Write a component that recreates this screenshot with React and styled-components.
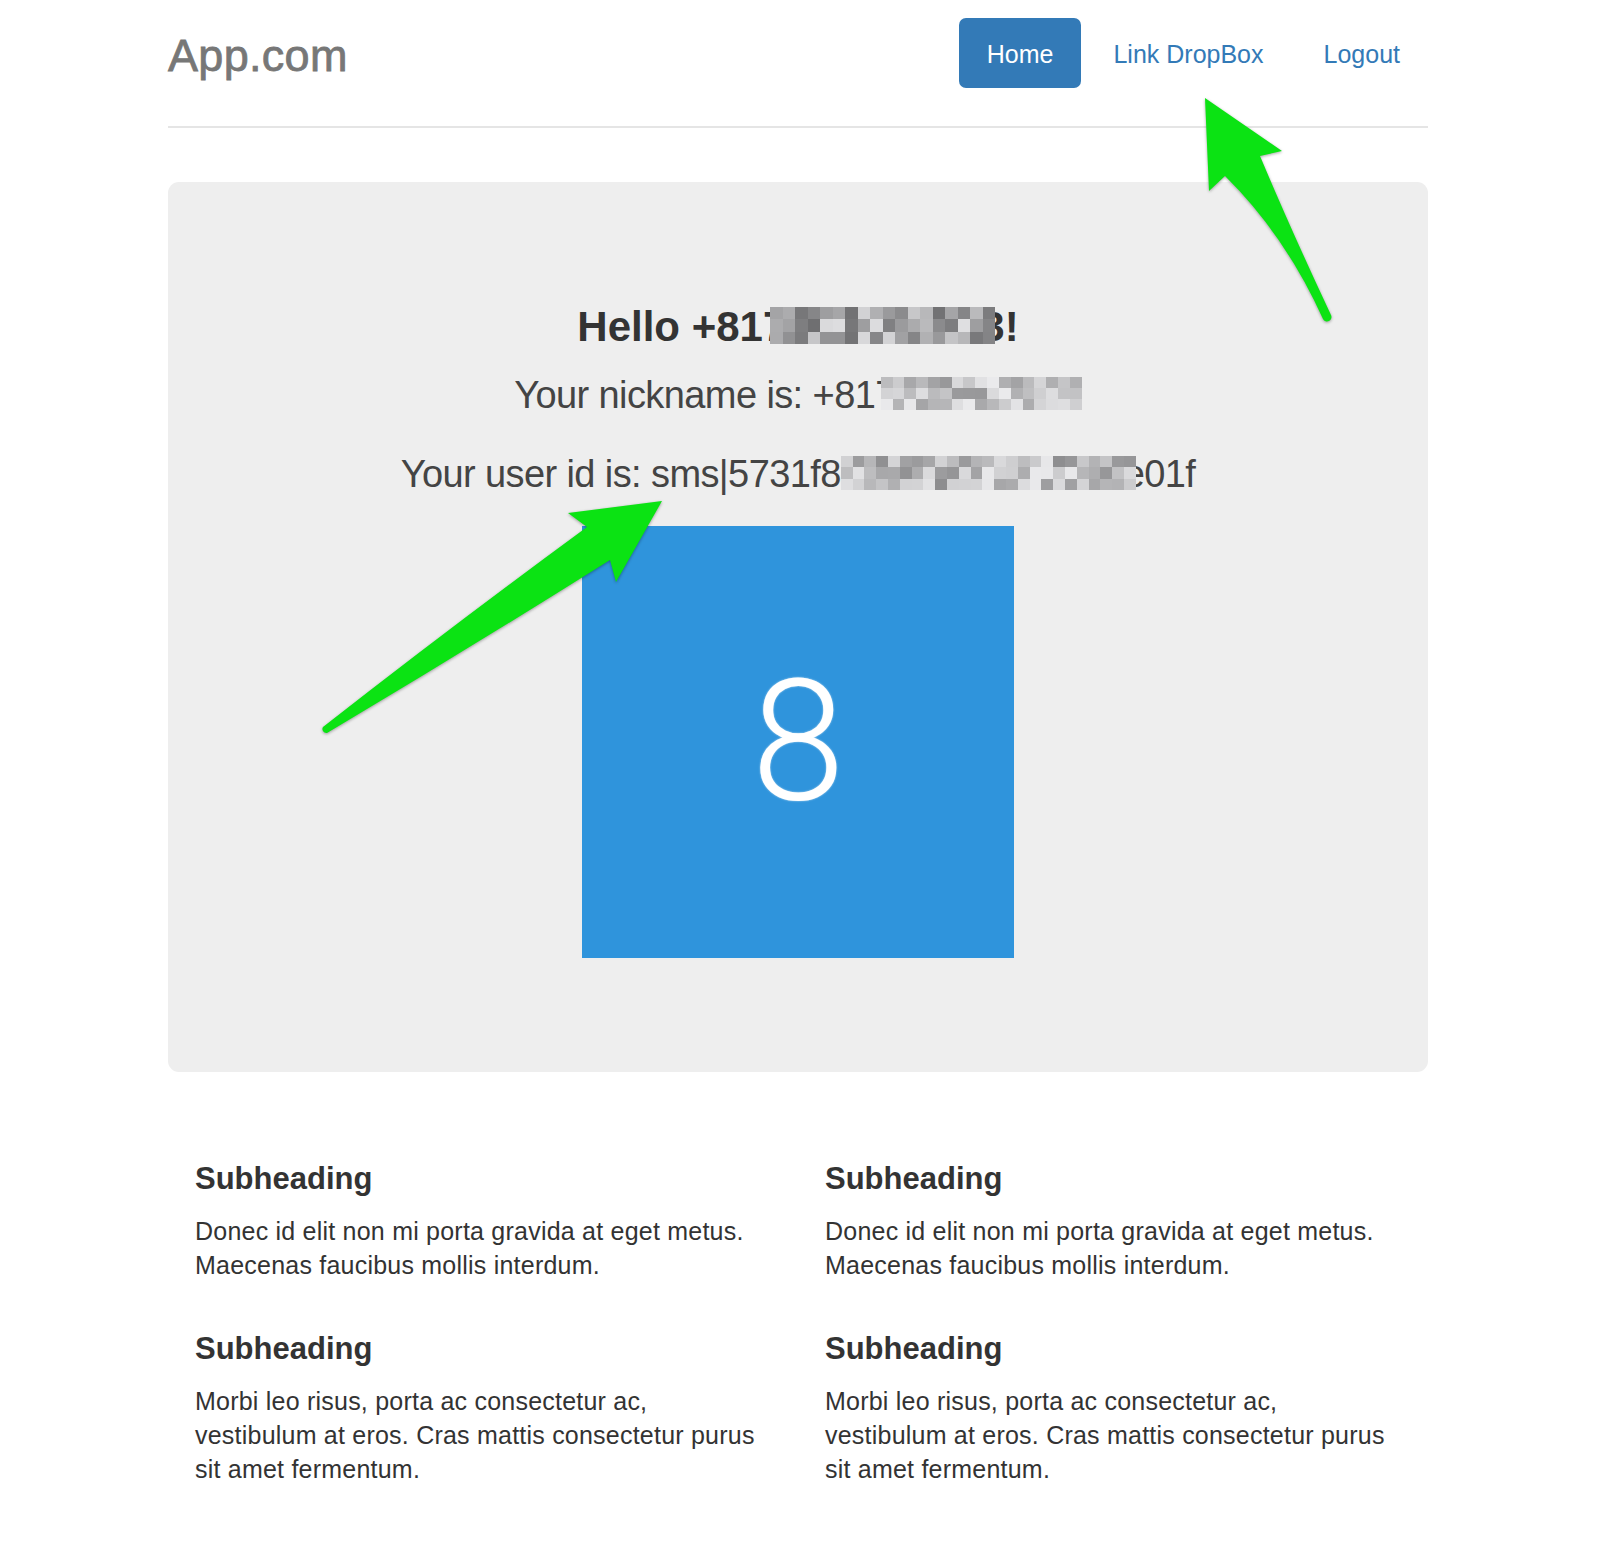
import React from "react";
import styled, { createGlobalStyle } from "styled-components";

const GlobalStyle = createGlobalStyle`
  html, body {
    margin: 0;
    padding: 0;
    background: #fff;
  }
  body {
    font-family: "Liberation Sans", Arial, Helvetica, sans-serif;
    color: #333;
  }
`;

// deterministic greys for the blurred (pixelated) parts of the text
function greys(seed, count, min, max) {
  let s = seed;
  const out = [];
  for (let i = 0; i < count; i++) {
    s = (s * 9301 + 49297) % 233280;
    const v = Math.round(min + (s / 233280) * (max - min));
    out.push(`rgb(${v},${v},${v + 2})`);
  }
  return out;
}

function Pixelated({ seed, cols, rows, width, height, min, max, drop, before = 0, after = 0 }) {
  const cells = greys(seed, cols * rows, min, max);
  return (
    <Mosaic $w={width} $h={height} $drop={drop} $before={before} $after={after}>
      <MosaicGrid $cols={cols} $rows={rows}>
        {cells.map((c, i) => (
          <Cell key={i} style={{ background: c }} />
        ))}
      </MosaicGrid>
    </Mosaic>
  );
}

function Arrows() {
  return (
    <Overlay viewBox="0 0 1614 1552" width="1614" height="1552">
      <path d="M662 501 L616 582 L610 560 Q470 648 327 733 A4 4 0 0 1 323 727 Q452 626 587 527 L568 513 Z" />
      <path d="M1205 98 L1282 151 L1260 156 Q1292 232 1331 315 A4 4 0 0 1 1323 319 Q1285 235 1225 176 L1209 191 Z" />
    </Overlay>
  );
}

const sections = [
  [
    {
      title: "Subheading",
      text: "Donec id elit non mi porta gravida at eget metus. Maecenas faucibus mollis interdum.",
    },
    {
      title: "Subheading",
      text: "Morbi leo risus, porta ac consectetur ac, vestibulum at eros. Cras mattis consectetur purus sit amet fermentum.",
    },
  ],
  [
    {
      title: "Subheading",
      text: "Donec id elit non mi porta gravida at eget metus. Maecenas faucibus mollis interdum.",
    },
    {
      title: "Subheading",
      text: "Morbi leo risus, porta ac consectetur ac, vestibulum at eros. Cras mattis consectetur purus sit amet fermentum.",
    },
  ],
];

export default function App() {
  return (
    <Page>
      <GlobalStyle />
      <Container>
        <Header>
          <Brand>App.com</Brand>
          <Nav>
            <NavLink $active>Home</NavLink>
            <NavLink>Link DropBox</NavLink>
            <NavLink>Logout</NavLink>
          </Nav>
        </Header>

        <Jumbotron>
          <Hello>
            Hello +817
            <Pixelated seed={7} cols={18} rows={3} width={225} height={37} min={105} max={225} drop={3} before={16} after={14} />
            3!
          </Hello>
          <Lead>
            Your nickname is: +817
            <Pixelated seed={31} cols={17} rows={3} width={201} height={33} min={150} max={236} drop={2} before={15} />
          </Lead>
          <Lead $gap={37}>
            Your user id is: sms|5731f8
            <Pixelated seed={113} cols={25} rows={3} width={295} height={34} min={140} max={236} drop={3} after={12} />
            e01f
          </Lead>
          <Avatar>8</Avatar>
        </Jumbotron>

        <Marketing>
          {sections.map((col, ci) => (
            <Column key={ci}>
              {col.map((item, i) => (
                <Block key={i}>
                  <Subheading>{item.title}</Subheading>
                  <Body>{item.text}</Body>
                </Block>
              ))}
            </Column>
          ))}
        </Marketing>
      </Container>
      <Arrows />
    </Page>
  );
}

const Page = styled.div`
  position: relative;
  width: 1614px;
  min-height: 1552px;
  padding: 18px 0 0 168px;
  box-sizing: border-box;
`;

const Container = styled.div`
  width: 1260px;
`;

const Header = styled.header`
  display: flex;
  justify-content: space-between;
  align-items: flex-start;
  padding-bottom: 32px;
  border-bottom: 2px solid #e5e5e5;
`;

const Brand = styled.h3`
  margin: 0;
  font-size: 45px;
  line-height: 76px;
  font-weight: 400;
  letter-spacing: 0.3px;
  color: #777;
  -webkit-text-stroke: 0.8px #777;
`;

const Nav = styled.nav`
  display: flex;
  gap: 4px;
`;

const NavLink = styled.a`
  display: block;
  height: 70px;
  box-sizing: border-box;
  padding: 2px 28px 0;
  line-height: 68px;
  font-size: 25px;
  border-radius: 7px;
  text-decoration: none;
  cursor: pointer;
  color: ${(p) => (p.$active ? "#fff" : "#337ab7")};
  background: ${(p) => (p.$active ? "#337ab7" : "transparent")};
`;

const Jumbotron = styled.section`
  margin-top: 54px;
  padding: 122px 0 114px;
  background: #eee;
  border-radius: 11px;
  text-align: center;
`;

const Hello = styled.h3`
  margin: 0;
  font-size: 42px;
  line-height: 46px;
  font-weight: 700;
  color: #333;
  white-space: nowrap;
`;

const Lead = styled.p`
  margin: ${(p) => p.$gap || 24}px 0 0;
  font-size: 38px;
  line-height: 42px;
  font-weight: 300;
  letter-spacing: -0.6px;
  color: #444;
  white-space: nowrap;
`;

const Mosaic = styled.span`
  position: relative;
  z-index: 1;
  display: inline-block;
  overflow: hidden;
  width: ${(p) => p.$w}px;
  height: ${(p) => p.$h}px;
  margin-left: -${(p) => p.$before}px;
  margin-right: -${(p) => p.$after}px;
  vertical-align: -${(p) => p.$drop}px;
  filter: blur(0.6px);
`;

const MosaicGrid = styled.span`
  display: grid;
  width: 100%;
  height: 100%;
  grid-template-columns: repeat(${(p) => p.$cols}, 1fr);
  grid-template-rows: repeat(${(p) => p.$rows}, 1fr);
`;

const Cell = styled.span`
  display: block;
`;

const Avatar = styled.div`
  width: 432px;
  height: 432px;
  margin: 31px auto 0;
  background: #2f94dc;
  color: #fff;
  display: flex;
  align-items: center;
  justify-content: center;
  font-family: Roboto, "Liberation Sans", sans-serif;
  font-size: 168px;
  line-height: 168px;
  font-weight: 300;
  text-shadow: 0 0 2px rgba(255, 255, 255, 0.7);
`;

const Marketing = styled.div`
  display: grid;
  grid-template-columns: 1fr 1fr;
  margin-top: 90px;
`;

const Column = styled.div`
  padding: 0 33px 0 27px;
  display: flex;
  flex-direction: column;
  gap: 50px;
`;

const Block = styled.div`
  display: flex;
  flex-direction: column;
  gap: 18px;
`;

const Subheading = styled.h4`
  margin: 0;
  font-size: 31px;
  line-height: 34px;
  font-weight: 700;
  color: #333;
`;

const Body = styled.p`
  margin: 0;
  font-size: 25px;
  line-height: 34px;
  letter-spacing: 0.22px;
  color: #333;
`;

const Overlay = styled.svg`
  position: absolute;
  top: 0;
  left: 0;
  pointer-events: none;
  fill: #0be313;
  filter: drop-shadow(0 1px 1.5px rgba(0, 0, 0, 0.35));
`;
